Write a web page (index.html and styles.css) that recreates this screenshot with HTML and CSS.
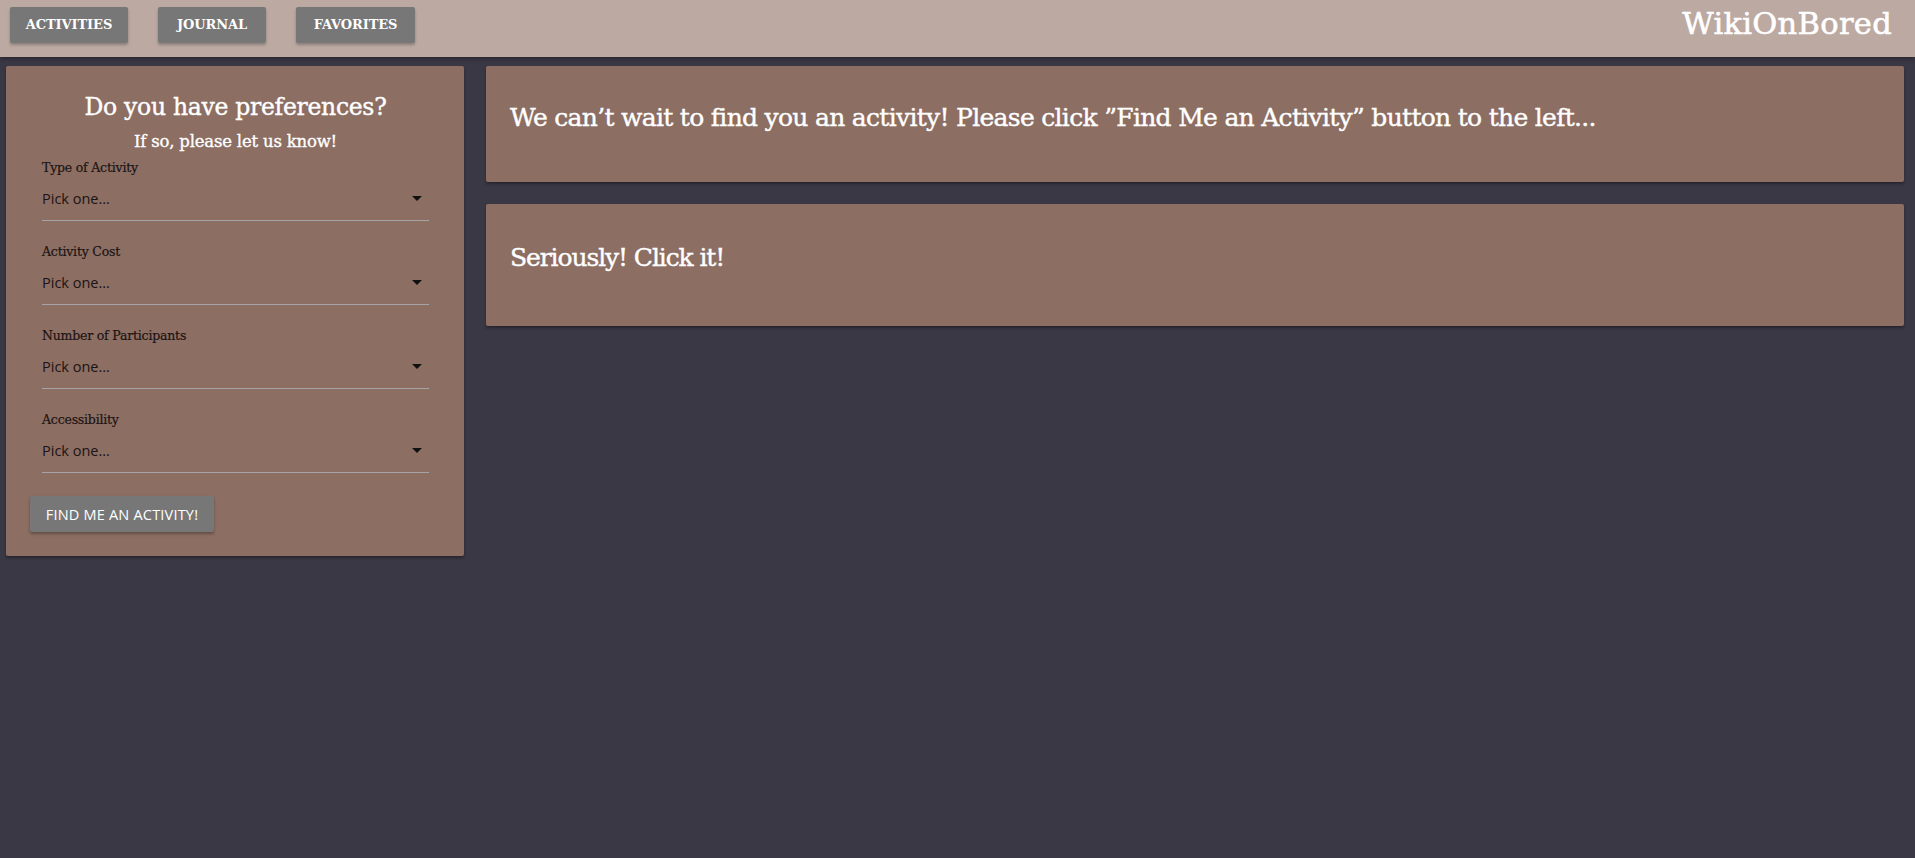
FILE: index.html
```html
<!DOCTYPE html>
<html>
<head>
<meta charset="utf-8">
<link rel="stylesheet" href="styles.css">
</head>
<body>
<nav class="nav">
  <div class="nav-links">
    <a class="nav-btn">ACTIVITIES</a>
    <a class="nav-btn">JOURNAL</a>
    <a class="nav-btn">FAVORITES</a>
  </div>
  <div class="brand">WikiOnBored</div>
</nav>
<main class="main">
  <section class="card prefs">
    <h2 class="prefs-title">Do you have preferences?</h2>
    <h3 class="prefs-sub">If so, please let us know!</h3>
    <div class="field">
      <label class="field-label">Type of Activity</label>
      <div class="select"><span>Pick one...</span><span class="caret"></span></div>
    </div>
    <div class="field">
      <label class="field-label">Activity Cost</label>
      <div class="select"><span>Pick one...</span><span class="caret"></span></div>
    </div>
    <div class="field">
      <label class="field-label">Number of Participants</label>
      <div class="select"><span>Pick one...</span><span class="caret"></span></div>
    </div>
    <div class="field">
      <label class="field-label">Accessibility</label>
      <div class="select"><span>Pick one...</span><span class="caret"></span></div>
    </div>
    <button class="find-btn">FIND ME AN ACTIVITY!</button>
  </section>
  <section class="results">
    <div class="card msg msg1"><p>We can’t wait to find you an activity! Please click ”Find Me an Activity” button to the left...</p></div>
    <div class="card msg msg2"><p>Seriously! Click it!</p></div>
  </section>
</main>
</body>
</html>
```
FILE: styles.css
```css
* { box-sizing: border-box; }
html, body { margin: 0; padding: 0; }
body {
  background: #3a3845;
  width: 1915px;
  height: 858px;
  overflow: hidden;
  font-family: "DejaVu Serif", serif;
}
.nav {
  height: 57px;
  background: #bba9a2;
  display: flex;
  align-items: flex-start;
  justify-content: space-between;
  padding: 7px 23px 0 10px;
  box-shadow: 0 2px 4px rgba(0,0,0,0.3);
}
.nav-links { display: flex; gap: 30px; }
.nav-btn {
  display: flex;
  align-items: center;
  justify-content: center;
  height: 36px;
  padding-bottom: 2px;
  background: #777777;
  color: #fff;
  border-radius: 2px;
  font-size: 13px;
  font-weight: bold;
  letter-spacing: -0.1px;
  box-shadow: 0 2px 3px rgba(0,0,0,0.25);
}
.nav-btn:nth-child(1) { width: 118px; }
.nav-btn:nth-child(2) { width: 108px; }
.nav-btn:nth-child(3) { width: 119px; }
.brand {
  color: #fff;
  font-size: 30.5px;
  line-height: 36px;
  letter-spacing: 0.3px;
  margin-top: -1px;
  -webkit-text-stroke: 0.6px #fff;
}
.main {
  display: flex;
  align-items: flex-start;
  padding: 9px 11px 0 6px;
  gap: 22px;
}
.card {
  background: #8c6e63;
  border-radius: 2px;
  box-shadow: 0 2px 3px rgba(0,0,0,0.35);
}
.prefs {
  width: 458px;
  flex: none;
  height: 490px;
  padding: 26px 35px 0 36px;
  display: flex;
  flex-direction: column;
}
.prefs-title {
  margin: 0;
  text-align: center;
  color: #fff;
  font-weight: normal;
  font-size: 23.5px;
  line-height: 30px;
  letter-spacing: -0.3px;
  -webkit-text-stroke: 0.4px #fff;
}
.prefs-sub {
  margin: 9px 0 0 0;
  text-align: center;
  color: #fff;
  font-weight: normal;
  font-size: 16.5px;
  line-height: 22px;
  letter-spacing: -0.2px;
  -webkit-text-stroke: 0.35px #fff;
}
.field { margin-top: 7px; }
.field + .field { margin-top: 23px; }
.field-label {
  display: block;
  color: #1b1414;
  font-size: 12.5px;
  line-height: 16px;
  letter-spacing: -0.2px;
  -webkit-text-stroke: 0.2px #1b1414;
}
.select {
  height: 45px;
  border-bottom: 1px solid #a6a3a8;
  display: flex;
  align-items: center;
  justify-content: space-between;
  font-family: "Open Sans", sans-serif;
  font-size: 14.5px;
  color: #1b1414;
}
.caret {
  width: 0;
  height: 0;
  border-left: 5px solid transparent;
  border-right: 5px solid transparent;
  border-top: 5px solid #111;
  margin-right: 7px;
}
.find-btn {
  margin-top: 23px;
  margin-left: -12px;
  align-self: flex-start;
  width: 184px;
  height: 36px;
  background: #777777;
  color: #fff;
  border: none;
  border-radius: 2px;
  font-family: "Open Sans", sans-serif;
  font-size: 14.5px;
  letter-spacing: 0.2px;
  box-shadow: 0 2px 3px rgba(0,0,0,0.3);
  padding: 0;
}
.results {
  flex: 1;
  display: flex;
  flex-direction: column;
  gap: 22px;
}
.msg {
  padding: 37px 24px 0 24px;
  color: #fff;
}
.msg p {
  margin: 0;
  font-size: 25px;
  line-height: 30px;
  letter-spacing: -0.7px;
  -webkit-text-stroke: 0.4px #fff;
}
.msg1 { height: 116px; }
.msg2 { height: 122px; padding-top: 39px; }
.msg2 p { letter-spacing: -1.1px; }
```
